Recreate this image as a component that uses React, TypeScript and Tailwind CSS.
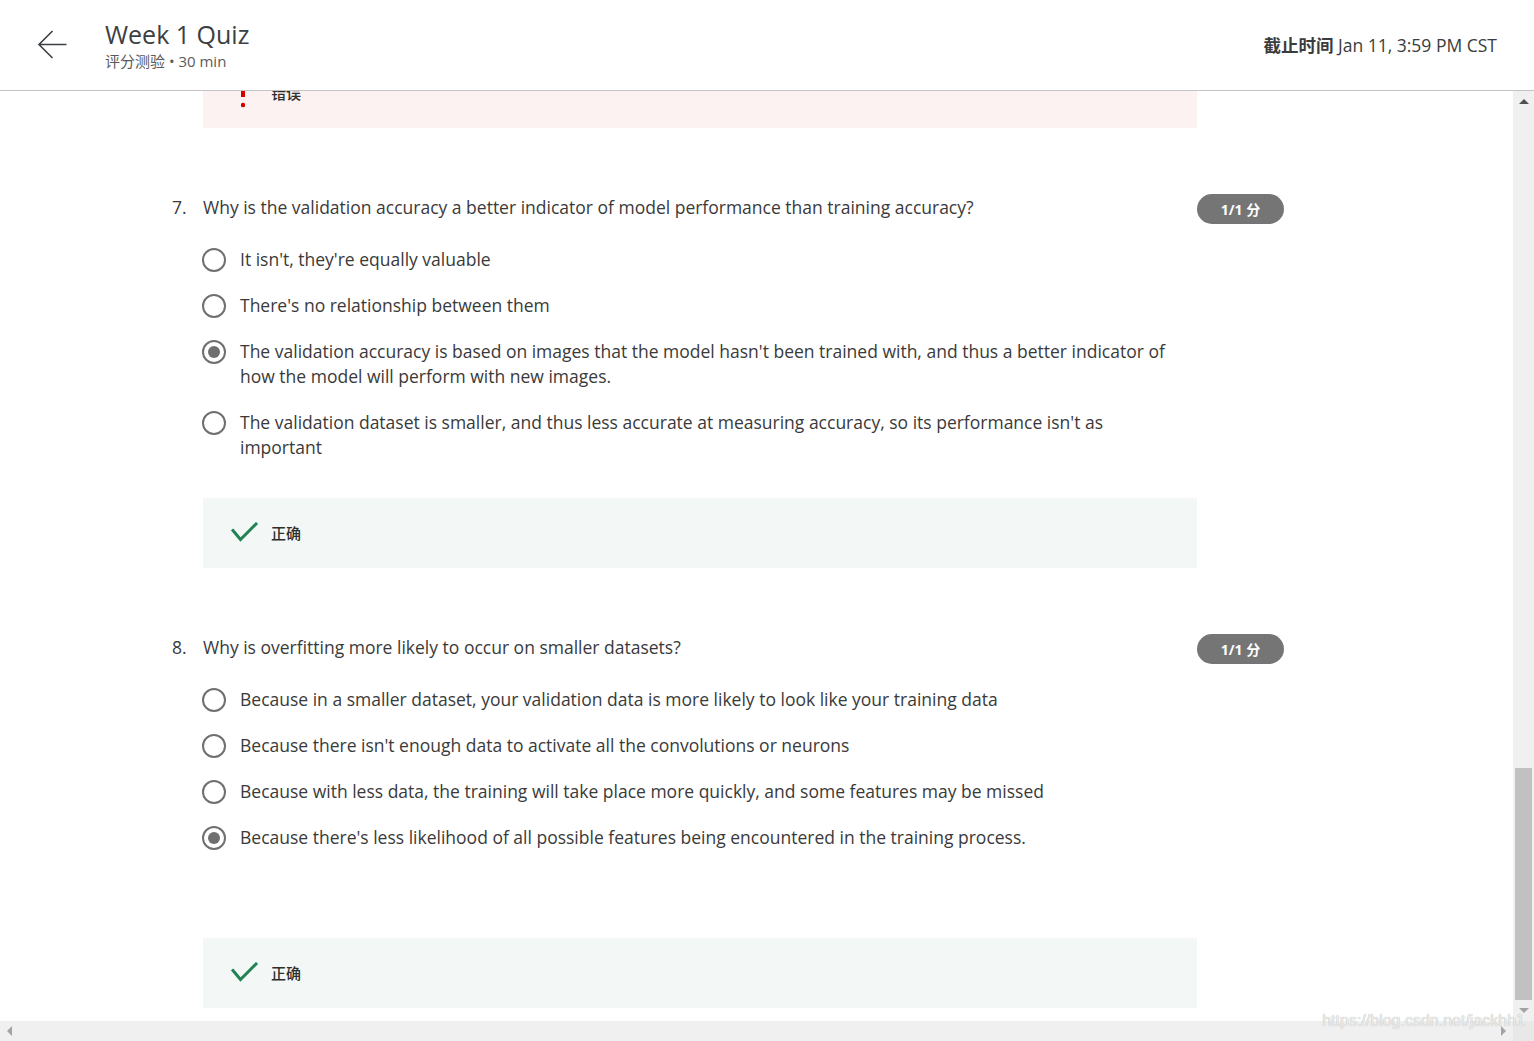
import React from "react";

type Option = { text: string; selected?: boolean };

type Question = {
    num: number;
    prompt: string;
    options: Option[];
    feedbackGap: string;
};

const questions: Question[] = [
    {
        num: 7,
        prompt: "Why is the validation accuracy a better indicator of model performance than training accuracy?",
        options: [
            { text: "It isn't, they're equally valuable" },
            { text: "There's no relationship between them" },
            {
                text: "The validation accuracy is based on images that the model hasn't been trained with, and thus a better indicator of how the model will perform with new images.",
                selected: true,
            },
            {
                text: "The validation dataset is smaller, and thus less accurate at measuring accuracy, so its performance isn't as important",
            },
        ],
        feedbackGap: "mt-[38px]",
    },
    {
        num: 8,
        prompt: "Why is overfitting more likely to occur on smaller datasets?",
        options: [
            { text: "Because in a smaller dataset, your validation data is more likely to look like your training data" },
            { text: "Because there isn't enough data to activate all the convolutions or neurons" },
            { text: "Because with less data, the training will take place more quickly, and some features may be missed" },
            {
                text: "Because there's less likelihood of all possible features being encountered in the training process.",
                selected: true,
            },
        ],
        feedbackGap: "mt-[88px]",
    },
];

const font = { fontFamily: '"Open Sans", "Noto Sans CJK SC", sans-serif' };

const Radio: React.FC<{ selected?: boolean }> = ({ selected }) => (
    <span className="mt-[0.5px] flex h-6 w-6 shrink-0 items-center justify-center rounded-full border-2 border-[#6f6f6f]">
        {selected && <span className="h-3 w-3 rounded-full bg-[#6f6f6f]" />}
    </span>
);

const CheckIcon = () => (
    <svg width="28" height="22" viewBox="0 0 28 22" fill="none">
        <polyline points="2,8.5 9.5,17.5 25,2" stroke="#1f8354" strokeWidth="3" strokeLinecap="square" />
    </svg>
);

const Feedback: React.FC<{ className?: string }> = ({ className }) => (
    <div className={`flex h-[70px] items-center bg-[#f3f8f6] pl-[28px] ${className ?? ""}`}>
        <CheckIcon />
        <span className="ml-[12px] text-[15px] font-medium text-[#2e2e2e]">正确</span>
    </div>
);

const QuestionBlock: React.FC<{ q: Question }> = ({ q }) => (
    <div className="flex">
        <span className="w-[31px] shrink-0 text-[17.5px] leading-[25px] text-[#3a3a3a]">{q.num}.</span>
        <div className="w-[994px] shrink-0">
            <p className="text-[17.5px] leading-[25px] text-[#3a3a3a]">{q.prompt}</p>
            <div className="mt-[27px] flex flex-col gap-[21px]">
                {q.options.map((o) => (
                    <div key={o.text} className="-ml-px flex items-start gap-[14px]">
                        <Radio selected={o.selected} />
                        <span className="max-w-[935px] text-[17.5px] leading-[25px] text-[#3a3a3a]">{o.text}</span>
                    </div>
                ))}
            </div>
            <Feedback className={q.feedbackGap} />
        </div>
        <span className="-mt-px flex h-[30px] w-[87px] shrink-0 items-center justify-center rounded-full bg-[#757575] text-[14px] font-bold text-white">
            1/1 分
        </span>
    </div>
);

const VScrollbar = () => (
    <div className="flex w-[21px] shrink-0 flex-col items-center bg-[#f0f0f0]">
        <div className="flex h-[21px] items-center justify-center">
            <span className="h-0 w-0 border-x-[5px] border-b-[5px] border-x-transparent border-b-[#505050]" />
        </div>
        <div className="flex-1" />
        <div className="h-[232px] w-[17px] bg-[#c1c1c1]" />
        <div className="flex h-[21px] items-center justify-center">
            <span className="h-0 w-0 border-x-[5px] border-t-[5px] border-x-transparent border-t-[#a3a3a3]" />
        </div>
    </div>
);

export default function App() {
    return (
        <div className="relative flex h-[1041px] w-[1534px] flex-col overflow-hidden bg-white" style={font}>
            <header className="flex h-[91px] shrink-0 items-center border-b border-[#c4c4c4] pr-[37px] pl-[37px]">
                <svg width="31" height="31" viewBox="0 0 31 31" fill="none" className="mt-[-1px]">
                    <path d="M29.5 15.5H2M15.5 2L2 15.5L15.5 29" stroke="#3c4043" strokeWidth="1.6" />
                </svg>
                <div className="ml-[37px] flex flex-col">
                    <h1 className="text-[25px] leading-[30px] text-[#3c4043]">Week 1 Quiz</h1>
                    <p className="mt-[2px] text-[15px] leading-[20px] text-[#5a5a5a]">评分测验 • 30 min</p>
                </div>
                <div className="ml-auto text-[17.5px] text-[#3c3c3c]">
                    <span className="font-bold">截止时间</span> Jan 11, 3:59 PM CST
                </div>
            </header>

            <div className="flex min-h-0 flex-1">
                <main className="min-w-0 flex-1 overflow-hidden">
                    <div className="mt-[-33px] pl-[172px]">
                        <div className="ml-[31px] flex h-[70px] w-[994px] items-center bg-[#fdf2f2] pl-[38px]">
                            <svg width="4" height="26" viewBox="0 0 4 26" className="mt-[3px]">
                                <rect x="0" y="0" width="4" height="15" fill="#d30000" />
                                <circle cx="2" cy="23" r="2.2" fill="#d30000" />
                            </svg>
                            <span className="ml-[26px] text-[15px] font-medium text-[#2e2e2e]">错误</span>
                        </div>
                        <div className="mt-[67px]">
                            <QuestionBlock q={questions[0]} />
                        </div>
                        <div className="mt-[67px]">
                            <QuestionBlock q={questions[1]} />
                        </div>
                    </div>
                </main>
                <VScrollbar />
            </div>

            <div className="flex h-[20px] shrink-0">
                <div className="flex flex-1 items-center justify-between bg-[#f0f0f0] px-[7px]">
                    <span className="h-0 w-0 border-y-[5px] border-r-[5px] border-y-transparent border-r-[#a3a3a3]" />
                    <span className="h-0 w-0 border-y-[5px] border-l-[5px] border-y-transparent border-l-[#a3a3a3]" />
                </div>
                <div className="w-[21px] bg-[#e8e8e8]" />
            </div>

            <span
                className="pointer-events-none absolute bottom-[8px] right-[9px] text-[16px] text-[#ececec]"
                style={{ fontFamily: '"Liberation Sans", sans-serif', textShadow: "0 0 1px #a8a8a8" }}
            >
                https://blog.csdn.net/jackhh1
            </span>
        </div>
    );
}
